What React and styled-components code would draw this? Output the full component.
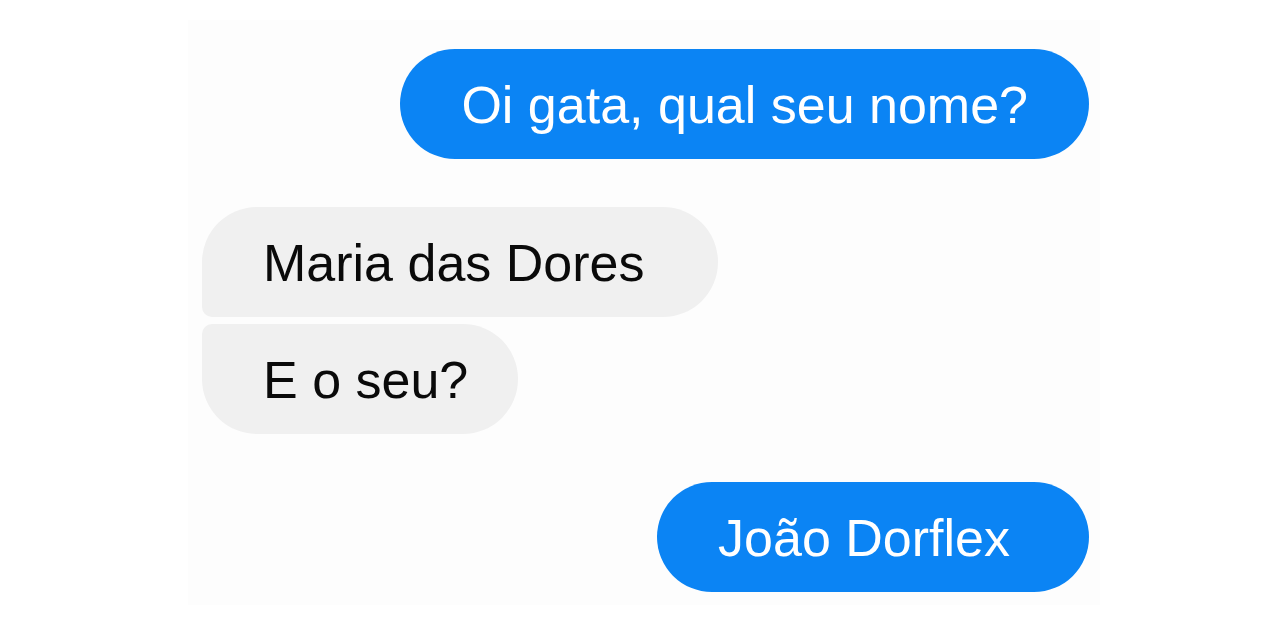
import React from 'react';
import styled, { createGlobalStyle } from 'styled-components';

const GlobalStyle = createGlobalStyle`
  html, body {
    margin: 0;
    padding: 0;
    background: #ffffff;
  }
  body {
    font-family: "Liberation Sans", Arial, Helvetica, sans-serif;
  }
`;

const Page = styled.div`
  width: 1280px;
  height: 630px;
  padding-top: 20px;
  box-sizing: border-box;
`;

const Chat = styled.div`
  margin-left: 188px;
  width: 912px;
  height: 585px;
  box-sizing: border-box;
  padding: 29px 11px 0 14px;
  background: #fdfdfd;
  display: flex;
  flex-direction: column;
`;

const Group = styled.div`
  display: flex;
  flex-direction: column;
  align-items: ${(p) => (p.$mine ? 'flex-end' : 'flex-start')};
  gap: 7px;
  margin-bottom: 48px;
`;

const Bubble = styled.div`
  height: 110px;
  display: flex;
  align-items: center;
  box-sizing: border-box;
  padding: 2px ${(p) => p.$padRight}px 0 61px;
  font-size: 52px;
  line-height: 1;
  white-space: nowrap;
  background: ${(p) => (p.$mine ? '#0b84f4' : '#f0f0f0')};
  color: ${(p) => (p.$mine ? '#ffffff' : '#0a0a0a')};
  border-radius: ${(p) => p.$radius};
`;

const radiusFor = (mine, index, count) => {
  if (count === 1) return '55px';
  const big = '55px';
  const small = '10px';
  if (mine) {
    const tr = index === 0 ? big : small;
    const br = index === count - 1 ? big : small;
    return `${big} ${tr} ${br} ${big}`;
  }
  const tl = index === 0 ? big : small;
  const bl = index === count - 1 ? big : small;
  return `${tl} ${big} ${big} ${bl}`;
};

const groups = [
  { mine: true, messages: [{ text: 'Oi gata, qual seu nome?', pad: 61 }] },
  {
    mine: false,
    messages: [
      { text: 'Maria das Dores', pad: 74 },
      { text: 'E o seu?', pad: 50 },
    ],
  },
  { mine: true, messages: [{ text: 'João Dorflex', pad: 79 }] },
];

export default function App() {
  return (
    <>
      <GlobalStyle />
      <Page>
        <Chat>
          {groups.map((g, gi) => (
            <Group key={gi} $mine={g.mine}>
              {g.messages.map((m, mi) => (
                <Bubble
                  key={mi}
                  $mine={g.mine}
                  $padRight={m.pad}
                  $radius={radiusFor(g.mine, mi, g.messages.length)}
                >
                  {m.text}
                </Bubble>
              ))}
            </Group>
          ))}
        </Chat>
      </Page>
    </>
  );
}
